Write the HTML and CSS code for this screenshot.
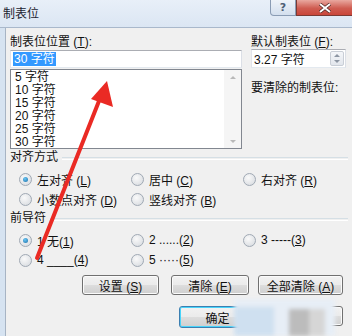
FILE: index.html
```html
<!DOCTYPE html>
<html lang="zh-CN">
<head>
  <meta charset="UTF-8">
  <meta name="viewport" content="width=device-width, initial-scale=1.0">
  <title>制表位</title>
  <link rel="stylesheet" href="styles.css">
</head>
<body>
  <div class="window">
    <div class="titlebar">
      <span class="title">制表位</span>
      <div class="caption">
        <span class="cap-help">?</span>
        <span class="cap-close">
          <svg width="14" height="10" viewBox="0 0 14 10"><path d="M2 1 L12 9 M12 1 L2 9" stroke="#4a2320" stroke-width="3.4"/><path d="M2 1 L12 9 M12 1 L2 9" stroke="#fff" stroke-width="2"/></svg>
        </span>
      </div>
    </div>

    <div class="client">
      <!-- 位置 / 默认制表位 -->
      <div class="top">
        <div class="col-left">
          <div class="label">制表位位置 (<u>T</u>):</div>
          <div class="textbox"><span class="sel">30 字符</span></div>
          <div class="listbox">
            <ul class="items">
              <li>5 字符</li>
              <li>10 字符</li>
              <li>15 字符</li>
              <li>20 字符</li>
              <li>25 字符</li>
              <li>30 字符</li>
            </ul>
            <div class="vscroll">
              <span class="arr up"></span>
              <span class="arr down"></span>
            </div>
          </div>
        </div>
        <div class="col-right">
          <div class="label">默认制表位 (<u>F</u>):</div>
          <div class="spin">
            <span>3.27 字符</span>
            <div class="spin-btns">
              <span class="arr up"></span>
              <span class="arr down"></span>
            </div>
          </div>
          <div class="label clear-label">要清除的制表位:</div>
        </div>
      </div>

      <!-- 对齐方式 -->
      <div class="group-title"><span>对齐方式</span></div>
      <div class="radios">
        <div class="radio"><i class="dot on"></i><span>左对齐 (<u>L</u>)</span></div>
        <div class="radio"><i class="dot"></i><span>居中 (<u>C</u>)</span></div>
        <div class="radio"><i class="dot"></i><span>右对齐 (<u>R</u>)</span></div>
        <div class="radio"><i class="dot"></i><span>小数点对齐 (<u>D</u>)</span></div>
        <div class="radio"><i class="dot"></i><span>竖线对齐 (<u>B</u>)</span></div>
      </div>

      <!-- 前导符 -->
      <div class="group-title"><span>前导符</span></div>
      <div class="radios">
        <div class="radio"><i class="dot on"></i><span>1 无(<u>1</u>)</span></div>
        <div class="radio"><i class="dot"></i><span>2 ......(<u>2</u>)</span></div>
        <div class="radio"><i class="dot"></i><span>3 -----(<u>3</u>)</span></div>
        <div class="radio"><i class="dot"></i><span>4 ____(<u>4</u>)</span></div>
        <div class="radio"><i class="dot"></i><span>5 ·····(<u>5</u>)</span></div>
      </div>

      <div class="buttons">
        <button class="btn w77">设置 (<u>S</u>)</button>
        <button class="btn w78 mid">清除 (<u>E</u>)</button>
        <button class="btn w85">全部清除 (<u>A</u>)</button>
      </div>
      <div class="buttons ok-row">
        <button class="btn default w77">确定</button>
        <button class="btn w77">取消</button>
      </div>
    </div>

    <svg class="arrow" width="352" height="336" viewBox="0 0 352 336">
      <path d="M37 258 L99 101" stroke="#ea2a24" stroke-width="4" stroke-linecap="round"/>
      <path d="M107 81 L113 107 L91 99 Z" fill="#ea2a24"/>
    </svg>

    <div class="mosaic">
      <span class="m1"></span>
      <span class="m2"></span>
      <span class="m3"></span>
    </div>
  </div>
</body>
</html>
```

FILE: styles.css
```css
body {
  margin: 0;
  padding: 0;
  background: #f0f0f0;
  font-family: "Liberation Sans", "Noto Sans CJK SC", sans-serif;
  font-size: 12px;
  color: #111;
}
u {
  text-decoration: underline;
  text-underline-offset: 1px;
}
.window {
  position: relative;
  width: 352px;
  height: 336px;
  overflow: hidden;
  background: #d6e3f1;
}
.titlebar {
  height: 27px;
  display: flex;
  justify-content: space-between;
  align-items: flex-start;
  background: linear-gradient(#e8eff8, #dbe6f3);
  border-bottom: 1px solid #a9b8cb;
}
.title {
  margin: 6px 0 0 3px;
  font-size: 12px;
  line-height: 16px;
  color: #1b2430;
}
.caption {
  display: flex;
}
.cap-help {
  width: 24px;
  height: 15px;
  border: 1px solid #8a9cb4;
  border-top: none;
  border-radius: 0 0 0 4px;
  background: linear-gradient(#eef3f9, #d3dfee);
  color: #4d5e75;
  font-family: "DejaVu Sans", sans-serif;
  font-size: 11px;
  font-weight: bold;
  line-height: 15px;
  text-align: center;
}
.cap-close {
  width: 55px;
  height: 15px;
  border-bottom: 1px solid #7a3a34;
  border-left: 1px solid #7a3a34;
  background: linear-gradient(#e9a89f, #cf5c51 55%, #c9463a);
  display: flex;
  justify-content: center;
  align-items: center;
}
.client {
  margin-left: 5px;
  height: 308px;
  border-left: 1px solid #a7b4c4;
  background: #f0f0f0;
  padding: 7px 0 0 4px;
  box-sizing: border-box;
}
.label {
  height: 14px;
  line-height: 14px;
  white-space: nowrap;
}
.top {
  display: flex;
  gap: 9px;
}
.col-left {
  width: 232px;
}
.textbox {
  margin-top: 1px;
  height: 18px;
  background: #fff;
  border: 1px solid #abadb3;
  border-color: #abadb3 #dbdfe6 #e3e9ef #e2e3ea;
  box-sizing: border-box;
  padding: 1px 0 0 2px;
}
.sel {
  display: inline-block;
  background: #3399ff;
  color: #fff;
  line-height: 14px;
  padding: 0 1px;
}
.listbox {
  margin-top: 1px;
  height: 80px;
  background: #fff;
  border: 1px solid #828790;
  box-sizing: border-box;
  display: flex;
}
.items {
  list-style: none;
  margin: 0;
  padding: 1px 0 0 4px;
  flex: 1;
}
.items li {
  height: 13px;
  line-height: 13px;
}
.vscroll {
  width: 17px;
  background: #f5f5f5;
  display: flex;
  flex-direction: column;
  justify-content: space-between;
  align-items: center;
  padding: 6px 0 5px;
  box-sizing: border-box;
}
.arr {
  width: 0;
  height: 0;
  border-left: 3px solid transparent;
  border-right: 3px solid transparent;
}
.arr.up {
  border-bottom: 3px solid #b9b9b9;
}
.arr.down {
  border-top: 3px solid #b9b9b9;
}
.col-right {
  width: 95px;
}
.spin {
  height: 19px;
  background: #fff;
  border: 1px solid #abadb3;
  border-color: #abadb3 #dbdfe6 #e3e9ef #e2e3ea;
  box-sizing: border-box;
  display: flex;
  align-items: center;
  justify-content: space-between;
  padding-left: 2px;
}
.spin-btns {
  width: 14px;
  height: 15px;
  margin-right: 1px;
  border: 1px solid #c9ced6;
  border-radius: 2px;
  background: linear-gradient(#f4f6f9, #e2e6ec);
  box-sizing: border-box;
  display: flex;
  flex-direction: column;
  align-items: center;
  justify-content: space-around;
}
.spin-btns .arr.up {
  border-bottom-color: #8d96a3;
}
.spin-btns .arr.down {
  border-top-color: #8d96a3;
}
.clear-label {
  margin-top: 13px;
}
.group-title {
  height: 14px;
  line-height: 14px;
  margin-top: 1px;
  display: flex;
  align-items: center;
  gap: 4px;
  padding-right: 4px;
}
.group-title::after {
  content: "";
  flex: 1;
  height: 1px;
  margin-top: 3px;
  border-top: 1px solid #d5dfe5;
  border-bottom: 1px solid #fff;
}
.radios {
  display: grid;
  grid-template-columns: 112px 112px 112px;
  grid-auto-rows: 20px;
  padding: 5px 0 1px 9px;
}
.radio {
  display: flex;
  align-items: center;
  gap: 5px;
  white-space: nowrap;
}
.dot {
  width: 11px;
  height: 11px;
  border-radius: 50%;
  border: 1px solid #a0a9b4;
  background: radial-gradient(circle at 40% 35%, #fafafa, #d4d8dd);
  display: flex;
  justify-content: center;
  align-items: center;
}
.dot.on::after {
  content: "";
  width: 5px;
  height: 5px;
  border-radius: 50%;
  background: radial-gradient(circle at 40% 35%, #6ac6f4, #1c6fa8);
}
.buttons {
  display: flex;
  justify-content: flex-end;
  gap: 9px;
  padding-right: 9px;
  margin-top: 4px;
}
.buttons .mid {
  margin-left: 3px;
}
.ok-row {
  margin-top: 11px;
  gap: 10px;
}
.btn {
  height: 20px;
  padding: 0;
  font-family: inherit;
  font-size: 12px;
  color: #111;
  border: 1px solid #707070;
  border-radius: 3px;
  background: linear-gradient(#f2f2f2, #ebebeb 49%, #dddddd 51%, #cfcfcf);
  box-shadow: inset 0 0 0 1px #fbfbfb;
}
.btn.default {
  height: 22px;
  border-color: #3c7fb1;
  box-shadow: inset 0 0 0 1px #48d4fa;
}
.w77 {
  width: 77px;
}
.w78 {
  width: 78px;
}
.w85 {
  width: 85px;
}
.arrow {
  position: absolute;
  left: 0;
  top: 0;
  pointer-events: none;
}
.mosaic {
  position: absolute;
  left: 234px;
  top: 299px;
  width: 101px;
  height: 37px;
  background: #e7eef6;
  filter: blur(2px);
}
.mosaic span {
  position: absolute;
}
.m1 {
  left: 0;
  top: 8px;
  width: 40px;
  height: 29px;
  background: #cfe0f0;
}
.m2 {
  left: 55px;
  top: 10px;
  width: 20px;
  height: 27px;
  background: #bcbcbc;
}
.m3 {
  left: 75px;
  top: 10px;
  width: 16px;
  height: 27px;
  background: #d6d6d6;
}
```
